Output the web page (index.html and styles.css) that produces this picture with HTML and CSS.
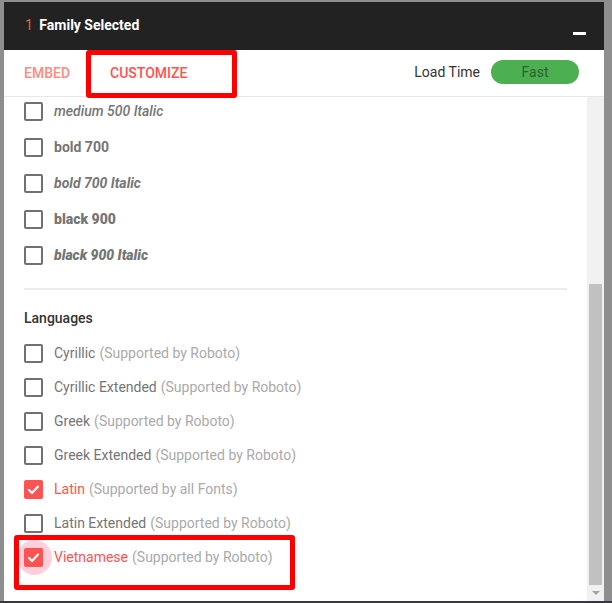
FILE: index.html
```html
<!DOCTYPE html>
<html lang="en">
<head>
  <meta charset="UTF-8" />
  <title>Family Selected</title>
  <meta name="viewport" content="width=device-width, initial-scale=1.0" />
  <link rel="stylesheet" href="styles.css">
</head>
<body>

  <div class="stage">
    <div class="panel">

      <!-- Header -->
      <div class="header">
        <div class="title"><span class="count">1</span> Family Selected</div>
        <span class="minimize"></span>
      </div>

      <!-- Tabs -->
      <div class="tabs">
        <span class="tab embed">EMBED</span>
        <span class="tab active">CUSTOMIZE</span>
        <span class="mark mark-tab"></span>
        <div class="load">
          <span>Load Time</span>
          <span class="pill">Fast</span>
        </div>
      </div>

      <!-- Content -->
      <div class="content">
        <div class="list">
          <div class="weights">
            <label class="row"><span class="box"></span><span class="w500 it">medium 500 Italic</span></label>
            <label class="row"><span class="box"></span><span class="w700">bold 700</span></label>
            <label class="row"><span class="box"></span><span class="w700 it">bold 700 Italic</span></label>
            <label class="row"><span class="box"></span><span class="w900">black 900</span></label>
            <label class="row"><span class="box"></span><span class="w900 it">black 900 Italic</span></label>
          </div>

          <hr class="divider" />

          <h4 class="section">Languages</h4>

          <div class="langs">
            <label class="row lang"><span class="box"></span><span class="name">Cyrillic</span><span class="sub">(Supported by Roboto)</span></label>
            <label class="row lang"><span class="box"></span><span class="name">Cyrillic Extended</span><span class="sub">(Supported by Roboto)</span></label>
            <label class="row lang"><span class="box"></span><span class="name">Greek</span><span class="sub">(Supported by Roboto)</span></label>
            <label class="row lang"><span class="box"></span><span class="name">Greek Extended</span><span class="sub">(Supported by Roboto)</span></label>
            <label class="row lang on">
              <span class="box"><svg viewBox="0 0 19 19" width="19" height="19"><polyline points="5,10 8,13 14,6.5" /></svg></span>
              <span class="name">Latin</span><span class="sub">(Supported by all Fonts)</span>
            </label>
            <label class="row lang"><span class="box"></span><span class="name">Latin Extended</span><span class="sub">(Supported by Roboto)</span></label>
            <label class="row lang on focus">
              <span class="box"><svg viewBox="0 0 19 19" width="19" height="19"><polyline points="5,10 8,13 14,6.5" /></svg></span>
              <span class="name">Vietnamese</span><span class="sub">(Supported by Roboto)</span>
              <span class="mark mark-lang"></span>
            </label>
          </div>
        </div>

        <div class="scrollbar">
          <div class="thumb"></div>
          <div class="arrow"></div>
        </div>
      </div>

    </div>
  </div>
  <div class="bottom-bar"></div>

</body>
</html>
```

FILE: styles.css
```css
* {
  margin: 0;
  padding: 0;
  box-sizing: border-box;
  font-family: 'Roboto', 'Liberation Sans', sans-serif;
}

body {
  background: #8e8e8e;
  height: 603px;
  overflow: hidden;
}

.stage {
  padding: 2px 8px 0 4px;
}

.panel {
  width: 600px;
  height: 599px;
  background: white;
  display: flex;
  flex-direction: column;
}

.bottom-bar {
  height: 2px;
  background: #3a3340;
}

/* header */

.header {
  height: 48px;
  background: #222;
  display: flex;
  justify-content: space-between;
  align-items: center;
  padding: 0 18px 0 21px;
  flex-shrink: 0;
}

.title {
  color: white;
  font-size: 14px;
  font-weight: 700;
  margin-top: -2px;
}

.count {
  color: #f0602e;
  font-weight: 400;
  margin-right: 3px;
}

.minimize {
  align-self: flex-end;
  width: 13px;
  height: 3px;
  background: white;
  margin-bottom: 15px;
}

/* tabs */

.tabs {
  position: relative;
  height: 47px;
  display: flex;
  align-items: center;
  padding: 0 25px 0 20px;
  border-bottom: 1px solid #e8e8e8;
  flex-shrink: 0;
}

.tab {
  font-size: 14px;
  font-weight: 500;
  margin-right: 40px;
  margin-top: -1px;
}

.tab.embed {
  color: #ff8a80;
}

.tab.active {
  color: #ff5252;
}

.load {
  margin-left: auto;
  display: flex;
  align-items: center;
  gap: 11px;
  font-size: 14px;
  color: #333;
  margin-top: -2px;
}

.pill {
  width: 88px;
  height: 24px;
  border-radius: 12px;
  background: #4caf50;
  color: #2d5f30;
  display: flex;
  align-items: center;
  justify-content: center;
}

/* red annotation boxes */

.mark {
  position: absolute;
  border: 5px solid #ff0000;
  border-radius: 3px;
  pointer-events: none;
}

.mark-tab {
  left: 82px;
  top: 0;
  width: 151px;
  height: 48px;
}

.mark-lang {
  left: -10px;
  top: -5px;
  width: 281px;
  height: 55px;
}

/* content */

.content {
  flex: 1;
  display: flex;
  overflow: hidden;
}

.list {
  flex: 1;
  padding: 0 20px;
  overflow: hidden;
}

.weights {
  margin-top: -4px;
}

.row {
  position: relative;
  z-index: 0;
  height: 36px;
  display: flex;
  align-items: center;
  font-size: 14px;
  color: #757575;
}

.box {
  position: relative;
  width: 19px;
  height: 19px;
  border: 2px solid #717171;
  border-radius: 2px;
  margin-right: 11px;
  flex-shrink: 0;
}

.w500 { font-weight: 500; }
.w700 { font-weight: 700; }
.w900 { font-weight: 900; }
.it { font-style: italic; }

.divider {
  border: none;
  height: 2px;
  background: #ebebeb;
  margin-top: 15px;
}

.section {
  font-size: 14px;
  font-weight: 500;
  color: #333;
  line-height: 20px;
  margin: 18px 0 8px;
}

.lang {
  height: 34px;
}

.lang .sub {
  color: #aaa;
  margin-left: 4px;
}

.lang.on .name {
  color: #ff5252;
}

.lang.on .box {
  border: none;
  background: #ff5252;
}

.box svg {
  display: block;
}

.box polyline {
  fill: none;
  stroke: white;
  stroke-width: 2.2;
  stroke-linecap: round;
  stroke-linejoin: round;
}

.focus .box::before {
  content: "";
  position: absolute;
  z-index: -1;
  left: -7px;
  top: -8px;
  width: 35px;
  height: 35px;
  border-radius: 50%;
  background: #ffd0dc;
}

/* scrollbar */

.scrollbar {
  width: 17px;
  background: #f1f1f1;
  display: flex;
  flex-direction: column;
  align-items: center;
}

.thumb {
  width: 13px;
  height: 301px;
  margin-top: 187px;
  background: #c1c1c1;
}

.arrow {
  margin-top: 6px;
  width: 0;
  height: 0;
  border-left: 4px solid transparent;
  border-right: 4px solid transparent;
  border-top: 4px solid #a3a3a3;
}
```
